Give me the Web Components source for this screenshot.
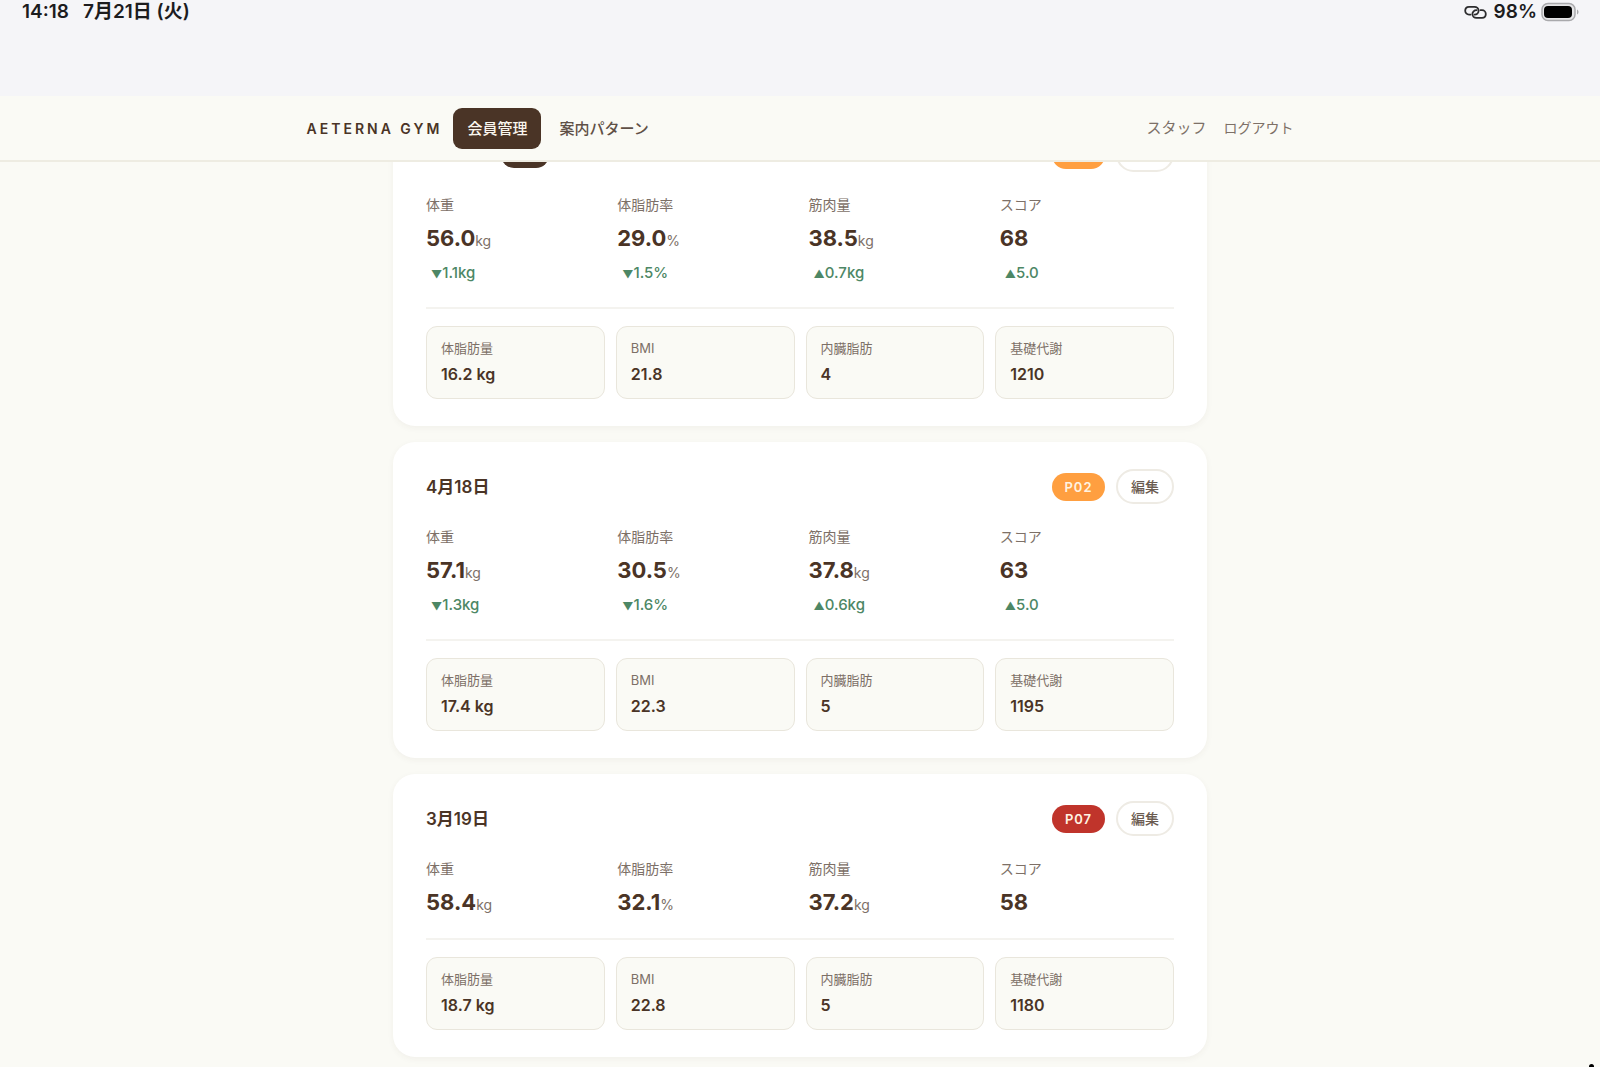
<!DOCTYPE html>
<html lang="ja">
<head>
<meta charset="utf-8">
<title>AETERNA GYM</title>
<style>
html, body { margin: 0; height: 100%; }
body { font-family: Inter, "Noto Sans CJK JP", sans-serif; color: #4a3426; background: #fafaf5; }
</style>
</head>
<body>
<gym-app></gym-app>
<script>
const define = (name, html, setup) => {
  const template = document.createElement('template');
  template.innerHTML = html;
  customElements.define(name, class extends HTMLElement {
    connectedCallback() {
      if (this.shadowRoot) return;
      const root = this.attachShadow({ mode: 'open' });
      root.append(template.content.cloneNode(true));
      if (setup) setup(this, root);
    }
  });
};

define('status-bar', `
<style>
:host { display: block; height: 96px; box-sizing: border-box; background: #f5f5f8; color: #1c1c1e; font-size: 19px; line-height: 24px; font-weight: 600; }
.row { display: flex; align-items: center; justify-content: space-between; padding: 0 21px 0 22px; }
.group { display: flex; align-items: center; }
.left { gap: 14px; }
.right { gap: 4px; }
.link { margin-right: 3px; }
svg { display: block; }
</style>
<div class="row">
  <div class="group left"><span>14:18</span><span>7月21日 (火)</span></div>
  <div class="group right">
    <svg class="link" width="23" height="15" viewBox="0 0 23 15" fill="none" stroke="#2c2c2e" stroke-width="1.8" stroke-linecap="round" aria-hidden="true">
      <path d="M6.500 9.600H5C2.800 9.600 1.200 7.900 1.200 5.700C1.200 3.500 2.800 1.900 5 1.900H10.500C12.800 1.900 14.600 3.600 14.600 5.700C14.600 7.900 12.800 9.600 10.500 9.600"/>
      <path d="M16.500 5.200H18C20.200 5.200 21.800 6.900 21.800 9.100C21.800 11.300 20.200 12.900 18 12.900H12.500C10.200 12.900 8.400 11.200 8.400 9.100C8.400 6.900 10.200 5.200 12.500 5.200"/>
    </svg>
    <span>98%</span>
    <svg width="38" height="20" viewBox="0 0 38 20" aria-hidden="true">
      <rect x="1" y="1.500" width="33" height="17" rx="6" fill="#e4e4e6" stroke="#a9a9ac" stroke-width="1.500"/>
      <rect x="3" y="4" width="28" height="12" rx="4" fill="#000"/>
      <path d="M36 7.500C38 8.200 38 11.800 36 12.500Z" fill="#a9a9ac"/>
    </svg>
  </div>
</div>`);

define('site-header', `
<style>
:host { display: block; position: relative; background: #fafaf5; border-bottom: 2px solid #eeece2; }
.inner { display: flex; align-items: center; justify-content: space-between; max-width: 987px; height: 64px; margin: 0 auto; padding: 0 24px; }
nav, .account { display: flex; align-items: center; }
nav { gap: 4px; }
.account { gap: 17px; color: #7d7067; font-size: 15px; line-height: 22px; }
.brand { font-size: 14px; font-weight: 600; letter-spacing: 3px; margin-right: 7px; white-space: nowrap; }
a { text-decoration: none; color: #5f5046; font-size: 15px; font-weight: 500; line-height: 23px; padding: 9px 14px; border-radius: 9px; white-space: nowrap; }
a[aria-current] { background: #4a3426; color: #faf6ee; }
button { all: unset; font-size: 14px; cursor: pointer; }
</style>
<div class="inner">
  <nav><span class="brand">AETERNA GYM</span><a href="#members" aria-current="page">会員管理</a><a href="#patterns">案内パターン</a></nav>
  <div class="account"><span>スタッフ</span><button type="button">ログアウト</button></div>
</div>`);

define('metric-item', `
<style>
:host { display: block; }
.label { font-size: 14px; line-height: 22px; color: #7d7067; }
.value { margin-top: 5px; font-size: 22px; line-height: 35px; font-weight: 700; white-space: nowrap; }
.unit { font-size: 14px; line-height: 14px; font-weight: 400; color: #7d7067; }
.delta { margin: 5px 0; padding-left: 5px; font-size: 15px; line-height: 23px; font-weight: 500; color: #4d8765; white-space: nowrap; }
.arrow { font-size: 11px; line-height: 11px; }
</style>
<div class="label"></div><div class="value"><span class="number"></span><span class="unit"></span></div><div class="delta"><span class="arrow"></span><span class="change"></span></div>`,
(host, root) => {
  for (const key of ['label', 'number', 'unit']) {
    const node = root.querySelector('.' + key);
    const text = host.getAttribute(key);
    if (text) node.textContent = text; else node.remove();
  }
  const delta = host.getAttribute('delta');
  if (delta) {
    root.querySelector('.arrow').textContent = delta[0];
    root.querySelector('.change').textContent = delta.slice(1);
  } else root.querySelector('.delta').remove();
});

define('detail-tile', `
<style>
:host { display: block; border: 1px solid #e9e6dc; border-radius: 11px; background: #fafaf5; padding: 12px 14px; }
.label { font-size: 13px; line-height: 18px; color: #7d7067; }
.value { margin-top: 5px; font-size: 16px; line-height: 24px; font-weight: 600; }
</style>
<div class="label"></div><div class="value"><slot></slot></div>`,
(host, root) => { root.querySelector('.label').textContent = host.getAttribute('label'); });

define('record-card', `
<style>
:host { display: block; background: #fff; border-radius: 22px; padding: 27px 33px; box-shadow: 0 2px 6px rgba(74, 52, 38, .05); }
header { display: flex; align-items: center; height: 35px; gap: 11px; }
h2 { margin: 0; font-size: 17px; line-height: 26px; font-weight: 600; }
.actions { display: flex; align-items: center; gap: 11px; margin-left: auto; }
.badge { box-sizing: border-box; min-width: 53px; height: 28px; padding: 0 12px; border-radius: 14px; background: var(--badge, #ff9f40); color: #fff3e2; font-size: 13px; line-height: 28px; font-weight: 600; text-align: center; letter-spacing: 1px; }
button { box-sizing: border-box; min-width: 58px; height: 35px; padding: 0; border: 2px solid #eeebe4; border-radius: 18px; background: #fff; color: #6b5b50; font: inherit; font-size: 14px; line-height: 20px; font-weight: 500; cursor: pointer; }
.metrics { display: grid; grid-template-columns: repeat(4, minmax(0, 1fr)); gap: 17px; margin-top: 22px; }
.details { display: grid; grid-template-columns: repeat(4, minmax(0, 1fr)); gap: 11px; margin-top: 18px; padding-top: 17px; border-top: 2px solid #f4f3ef; }
</style>
<header>
  <slot name="date"></slot><h2></h2>
  <div class="actions"><span class="badge"></span><button type="button" aria-label="編集"></button></div>
</header>
<div class="metrics"><slot name="metric"></slot></div>
<div class="details"><slot name="detail"></slot></div>`,
(host, root) => {
  root.querySelector('h2').textContent = host.getAttribute('date') || '';
  root.querySelector('.badge').textContent = host.getAttribute('pattern') || '';
  if (host.hasAttribute('pattern')) root.querySelector('button').textContent = '編集';
});

const records = [
  { latest: true, m: [['体重','56.0','kg','▼1.1kg'],['体脂肪率','29.0','%','▼1.5%'],['筋肉量','38.5','kg','▲0.7kg'],['スコア','68','','▲5.0']], d: ['16.2 kg','21.8','4','1210'] },
  { date: '4月18日', pattern: 'P02', m: [['体重','57.1','kg','▼1.3kg'],['体脂肪率','30.5','%','▼1.6%'],['筋肉量','37.8','kg','▲0.6kg'],['スコア','63','','▲5.0']], d: ['17.4 kg','22.3','5','1195'] },
  { date: '3月19日', pattern: 'P07', color: '#c0342b', m: [['体重','58.4','kg',''],['体脂肪率','32.1','%',''],['筋肉量','37.2','kg',''],['スコア','58','','']], d: ['18.7 kg','22.8','5','1180'] }
];
const detailLabels = ['体脂肪量', 'BMI', '内臓脂肪', '基礎代謝'];

define('gym-app', `
<style>
:host { display: flex; flex-direction: column; height: 100vh; overflow: hidden; position: relative; }
status-bar, site-header { flex: none; }
site-header { z-index: 1; }
main { flex: 1; min-height: 0; overflow: hidden; }
.list { display: flex; flex-direction: column; gap: 16px; max-width: 814px; margin: -52px auto 0; }
.latest { width: 48px; height: 26px; margin-left: 75px; border-radius: 13px; background: #4a3426; }
.corner { position: absolute; right: 6px; bottom: -3px; width: 5px; height: 6px; border-radius: 3px; background: #000; }
</style>
<status-bar></status-bar>
<site-header></site-header>
<main><div class="list"></div></main>
<span class="corner"></span>`,
(host, root) => {
  root.querySelector('.list').innerHTML = records.map(r => `
    <record-card ${r.date ? `date="${r.date}" pattern="${r.pattern}"` : ''} ${r.color ? `style="--badge: ${r.color}"` : ''}>
      ${r.latest ? '<span slot="date" class="latest"></span>' : ''}
      ${r.m.map(([label, number, unit, delta]) => `<metric-item slot="metric" label="${label}" number="${number}" unit="${unit}" delta="${delta}"></metric-item>`).join('')}
      ${r.d.map((value, i) => `<detail-tile slot="detail" label="${detailLabels[i]}">${value}</detail-tile>`).join('')}
    </record-card>`).join('');
});
</script>
</body>
</html>
